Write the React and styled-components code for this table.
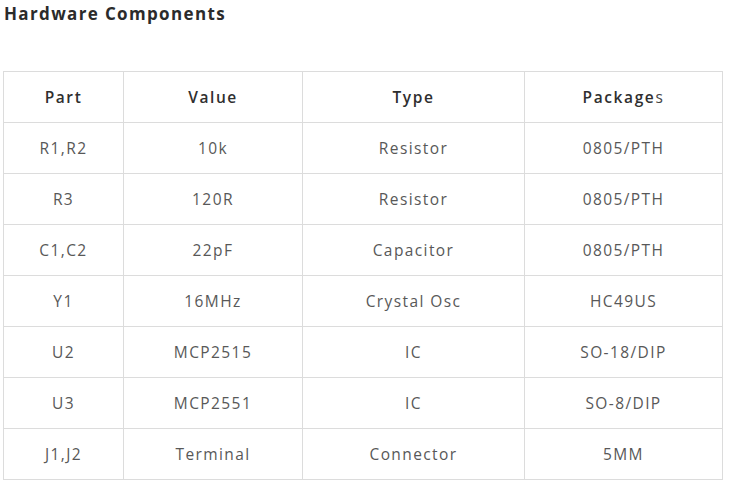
import React from 'react';
import styled, { createGlobalStyle } from 'styled-components';

const GlobalStyle = createGlobalStyle`
  body {
    margin: 0;
    padding: 0;
    background: #fff;
    font-family: 'Open Sans', 'Liberation Sans', sans-serif;
  }
`;

const Page = styled.div`
  padding: 3px 0 0 3px;
  width: 719px;
`;

const Title = styled.h3`
  margin: 0 0 0 1px;
  height: 68px;
  font-size: 17px;
  line-height: 22px;
  font-weight: 700;
  color: #2b2b2b;
  letter-spacing: 1.35px;
`;

const Table = styled.table`
  border-collapse: collapse;
  width: 719px;
  table-layout: fixed;
`;

const Cell = styled.td`
  border: 1px solid #dcdcdc;
  height: 50px;
  padding: 0;
  text-align: center;
  font-size: 15.5px;
  letter-spacing: ${(p) => (p.$head ? '1.6px' : '1.4px')};
  color: ${(p) => (p.$head ? '#2f2f2f' : '#585858')};
  font-weight: ${(p) => (p.$head ? 600 : 400)};
`;

const Light = styled.span`
  font-weight: 400;
  color: #444;
`;

const rows = [
  ['R1,R2', '10k', 'Resistor', '0805/PTH'],
  ['R3', '120R', 'Resistor', '0805/PTH'],
  ['C1,C2', '22pF', 'Capacitor', '0805/PTH'],
  ['Y1', '16MHz', 'Crystal Osc', 'HC49US'],
  ['U2', 'MCP2515', 'IC', 'SO-18/DIP'],
  ['U3', 'MCP2551', 'IC', 'SO-8/DIP'],
  ['J1,J2', 'Terminal', 'Connector', '5MM'],
];

export default function App() {
  return (
    <>
      <GlobalStyle />
      <Page>
        <Title>Hardware Components</Title>
        <Table>
          <colgroup>
            <col style={{ width: 120 }} />
            <col style={{ width: 179 }} />
            <col style={{ width: 222 }} />
            <col style={{ width: 198 }} />
          </colgroup>
          <tbody>
            <tr>
              <Cell $head>Part</Cell>
              <Cell $head>Value</Cell>
              <Cell $head>Type</Cell>
              <Cell $head>
                Package<Light>s</Light>
              </Cell>
            </tr>
            {rows.map((r) => (
              <tr key={r[0]}>
                {r.map((c, i) => (
                  <Cell key={i}>{c}</Cell>
                ))}
              </tr>
            ))}
          </tbody>
        </Table>
      </Page>
    </>
  );
}
